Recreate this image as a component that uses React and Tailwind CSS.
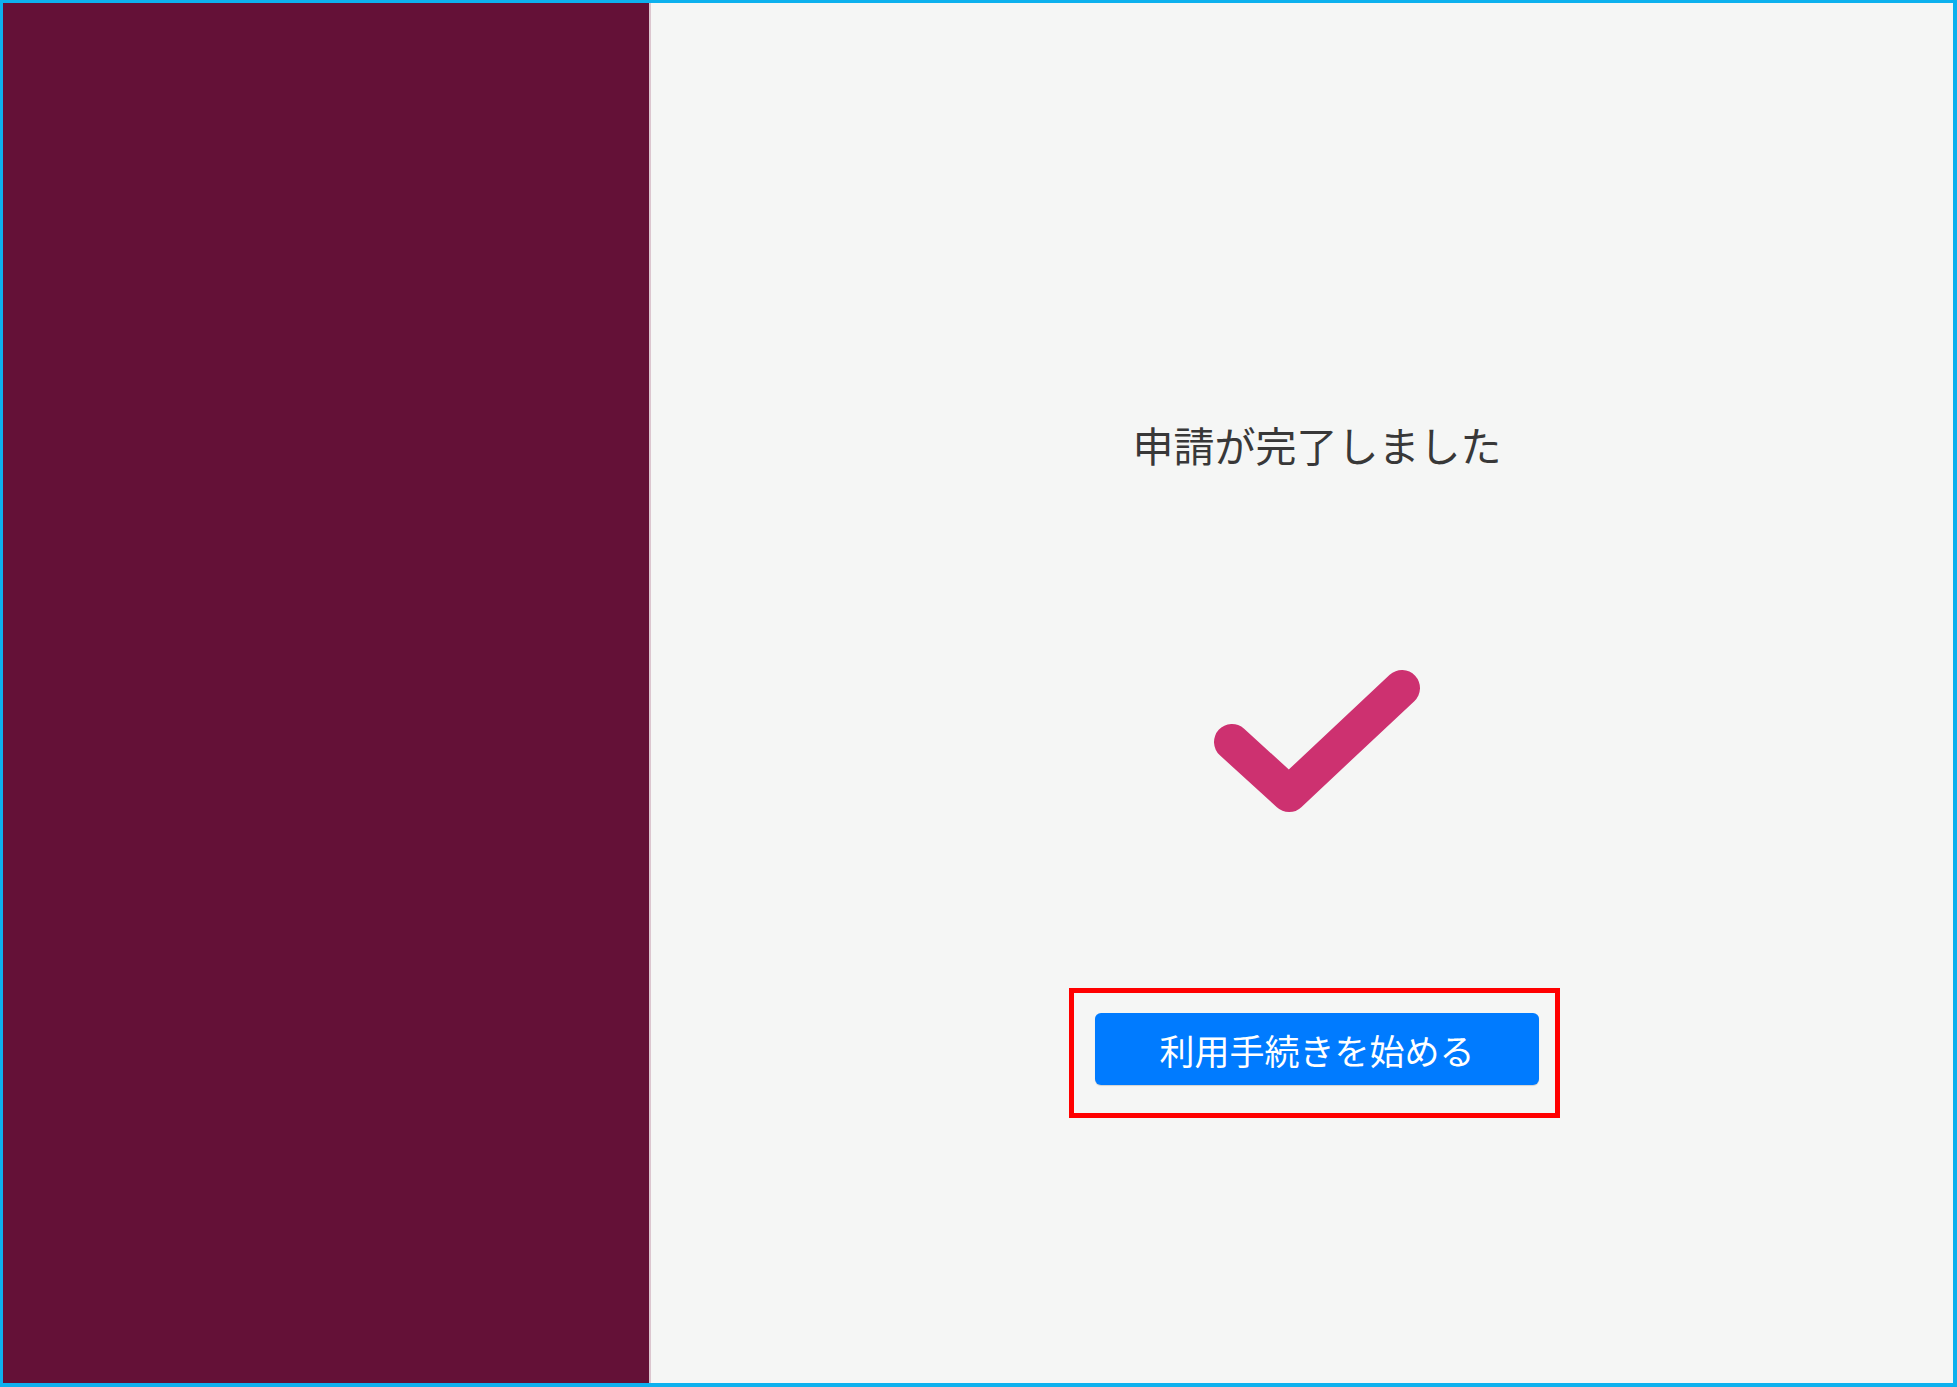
import React from "react";

const CheckMark = () => (
  <svg width="236" height="165" viewBox="0 0 236 165" fill="none">
    <polyline
      points="33,83 90,135 203,29"
      stroke="#cd3170"
      strokeWidth="36"
      strokeLinecap="round"
      strokeLinejoin="round"
    />
  </svg>
);

const App = () => {
  return (
    <div
      className="flex h-[1387px] w-full border-t-[3px] border-l-[3px] border-r-4 border-b-4 border-[#0db1ee] bg-[#f5f6f5]"
      style={{ fontFamily: '"Noto Sans CJK JP", "Noto Sans", sans-serif' }}
    >
      <div className="w-[648px] shrink-0 bg-[#641137] border-r-2 border-[#dcc6cf]" />

      <div className="flex flex-1 flex-col items-center pl-[30px]">
        <h1 className="mt-[421px] text-[41px] leading-none font-normal text-[#383838]">
          申請が完了しました
        </h1>

        <div className="mt-[194px]">
          <CheckMark />
        </div>

        <div className="mt-[164px] mr-[5px] w-[491px] border-[5px] border-[#ff0000] pl-[21px] pr-[16px] pt-[20px] pb-[28px]">
          <button
            type="button"
            className="flex h-[72px] w-[444px] items-center justify-center rounded-md bg-[#007bff] text-[35px] leading-none text-white shadow-[0_1px_1px_rgba(0,0,0,0.15)]"
          >
            利用手続きを始める
          </button>
        </div>
      </div>
    </div>
  );
};

export default App;
